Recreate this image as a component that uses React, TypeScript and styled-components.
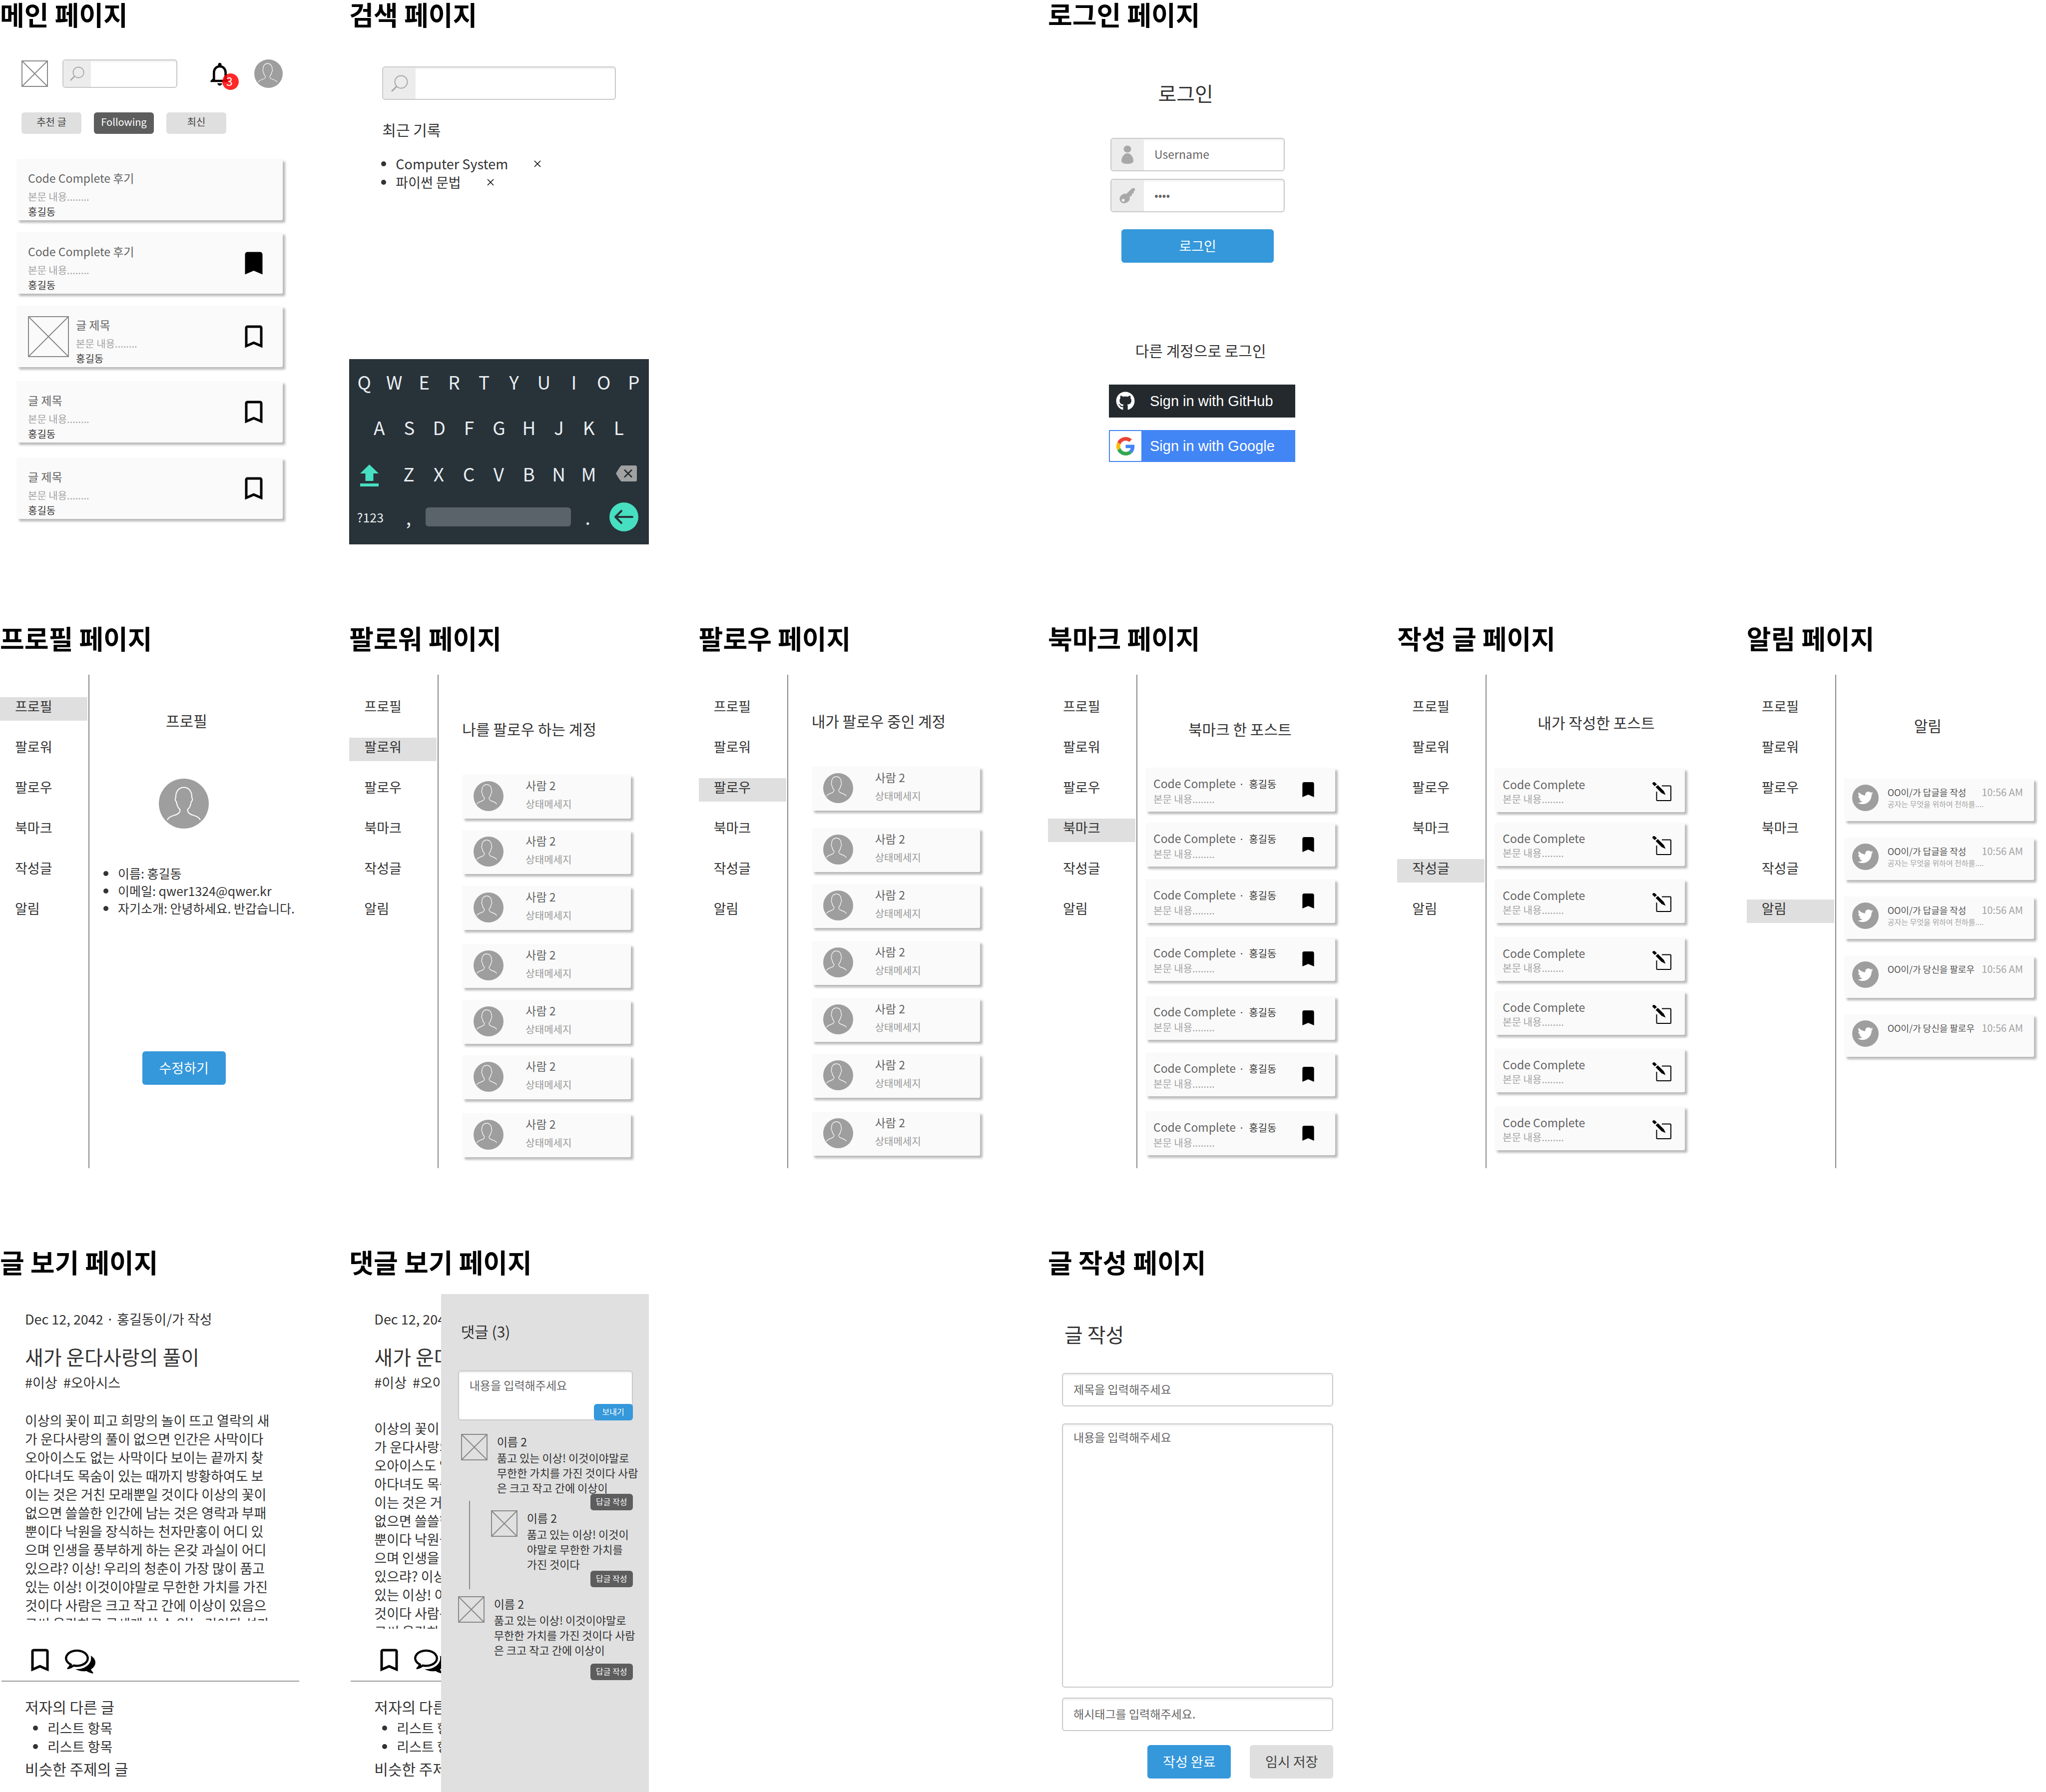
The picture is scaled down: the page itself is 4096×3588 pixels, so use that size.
import React from "react";
import styled, { createGlobalStyle } from "styled-components";
import { FaGithub, FaTwitter } from "react-icons/fa";

const GlobalStyle = createGlobalStyle`
  *, *::before, *::after { box-sizing: border-box; }
  body {
    margin: 0;
    background: #fff;
    color: #333;
    font-family: "Noto Sans CJK KR", "Noto Sans", sans-serif;
    font-size: 27px;
    line-height: 37px;
  }
  h1, h2, h3, p, ul { margin: 0; padding: 0; font-weight: 400; }
  ul { list-style: none; }
  button { border: 0; padding: 0; background: none; font: inherit; color: inherit; }
  a { color: inherit; text-decoration: none; }
  input, textarea { border: 0; padding: 0; background: none; font: inherit; color: #666; outline: 0; }
  input::placeholder, textarea::placeholder { color: #666; opacity: 1; }
  svg { display: block; flex: none; }
`;

/* ---------- board ---------- */

const Board = styled.main`
  display: grid;
  grid-template-columns: repeat(6, minmax(0, 1fr));
  column-gap: 100px;
  row-gap: 159px;
`;

const Page = styled.section<{ $column: number; $row: number }>`
  grid-column: ${(p) => p.$column};
  grid-row: ${(p) => p.$row};
  display: flex;
  flex-direction: column;
`;

const PageTitle = styled.h1`
  height: 93px;
  font-size: 53px;
  line-height: 56px;
  font-weight: 700;
  color: #000;
  white-space: nowrap;
`;

const Screen = styled.div`
  min-height: 997px;
  display: flex;
  flex-direction: column;
  position: relative;
`;

/* ---------- shared parts ---------- */

const Field = styled.div<{ $height?: number }>`
  display: flex;
  height: ${(p) => p.$height ?? 67}px;
  border: 2px solid #c9c9c9;
  border-radius: 6px;
  background: #fff;
  box-shadow: inset 0 3px 3px rgba(0, 0, 0, 0.06);
  overflow: hidden;
`;

const FieldIcon = styled.span<{ $width?: number }>`
  flex: none;
  width: ${(p) => p.$width ?? 65}px;
  display: flex;
  align-items: center;
  justify-content: center;
  background: #ececec;
`;

const FieldInput = styled.input`
  flex: 1;
  min-width: 0;
  padding: 0 21px 4px;
  font-size: 23px;
  line-height: 34px;
`;

const TextBox = styled.textarea<{ $height: number; $top: number }>`
  display: block;
  width: 100%;
  height: ${(p) => p.$height}px;
  padding: ${(p) => p.$top}px 21px;
  border: 2px solid #c9c9c9;
  border-radius: 6px;
  background: #fff;
  box-shadow: inset 0 3px 3px rgba(0, 0, 0, 0.06);
  font-size: 23px;
  line-height: 34px;
  resize: none;
`;

const Button = styled.button<{ $tone?: "primary" | "plain"; $width?: number }>`
  width: ${(p) => (p.$width ? `${p.$width}px` : "auto")};
  height: 67px;
  padding-bottom: 3px;
  border-radius: 6px;
  background: ${(p) => (p.$tone === "plain" ? "#dfdfdf" : "#3598db")};
  color: ${(p) => (p.$tone === "plain" ? "#444" : "#fff")};
  font-size: 27px;
`;

const SmallButton = styled.button<{ $tone?: "primary" | "dark" }>`
  width: ${(p) => (p.$tone === "primary" ? 78 : 85)}px;
  height: 33px;
  padding-bottom: 3px;
  border-radius: 6px;
  background: ${(p) => (p.$tone === "primary" ? "#3598db" : "#5d5d5d")};
  color: #fff;
  font-size: 16px;
  line-height: 24px;
`;

const Card = styled.article<{ $height?: number }>`
  display: flex;
  min-height: ${(p) => p.$height ?? 88}px;
  background: #fafafa;
  border-radius: 3px;
  box-shadow: 5px 5px 4px rgba(0, 0, 0, 0.27);
`;

const CardItem = styled.li<{ $gap: number }>`
  margin-top: ${(p) => p.$gap}px;
`;

const CardTitle = styled.h3`
  font-size: 23px;
  line-height: 30px;
  color: #636363;
  white-space: nowrap;
`;

const CardNote = styled.p`
  font-size: 20px;
  line-height: 30px;
  color: #a3a3a3;
  white-space: nowrap;
`;

const CardAuthor = styled.span`
  display: block;
  font-size: 20px;
  line-height: 30px;
  color: #333;
`;

const Heading = styled.h2`
  font-size: 30px;
  line-height: 44px;
  color: #333;
  white-space: nowrap;
`;

const LargeHeading = styled.h2`
  font-size: 40px;
  line-height: 58px;
  color: #333;
  white-space: nowrap;
`;

const BulletItem = styled.li<{ $compact?: boolean }>`
  display: flex;
  align-items: center;
  gap: 19px;
  font-size: ${(p) => (p.$compact ? 25 : 27)}px;
  line-height: ${(p) => (p.$compact ? 35 : 37)}px;
  white-space: nowrap;
  &::before {
    content: "";
    flex: none;
    width: 10px;
    height: 10px;
    border-radius: 50%;
    background: #333;
  }
`;

/* ---------- drawings ---------- */

const Placeholder = ({ size }: { size: number }) => (
  <svg width={size} height={size} viewBox={`0 0 ${size} ${size}`} fill="none" stroke="#888" strokeWidth="2" role="img" aria-label="이미지">
    <rect x="1" y="1" width={size - 2} height={size - 2} />
    <path d={`M1 1 ${size - 1} ${size - 1}M${size - 1} 1 1 ${size - 1}`} />
  </svg>
);

const Avatar = ({ size, shift = 0 }: { size: number; shift?: number }) => (
  <svg width={size} height={size} viewBox="0 0 100 100" role="img" aria-label="프로필 사진">
    <circle cx="50" cy="50" r="50" fill="#9e9e9e" />
    <path
      transform={`translate(${-shift} ${-shift})`}
      d="M17 83C21 71 43 76 42.5 62C38 58 36 53 35.5 47C31.500 43 32.500 39 34 38C32.500 10.500 67.500 10.500 66 38C67.500 39 68.500 43 64.500 47C64 53 62 58 57.500 62C57 76 79 71 83 83"
      fill="none"
      stroke="#fff"
      strokeWidth="2"
    />
  </svg>
);

const SearchIcon = ({ size }: { size: number }) => (
  <svg width={size} height={size} viewBox="0 0 34 34" fill="none" stroke="#a6a6a6" strokeLinecap="round">
    <circle cx="20" cy="14" r="12.500" strokeWidth="2" />
    <path d="M11 23 2 32" strokeWidth="3" />
  </svg>
);

const BellIcon = () => (
  <svg width="56" height="56" viewBox="0 0 24 24">
    <path d="M12 22c1.100 0 2-.9 2-2h-4c0 1.100.89 2 2 2zm6-6v-5c0-3.070-1.640-5.640-4.500-6.320V4c0-.83-.67-1.500-1.500-1.500s-1.500.67-1.500 1.500v.68C7.630 5.360 6 7.920 6 11v5l-2 2v1h16v-1l-2-2zm-2 1H8v-6c0-2.480 1.510-4.500 4-4.500s4 2.020 4 4.500v6z" />
  </svg>
);

const BookmarkIcon = ({ size, filled }: { size: number; filled?: boolean }) => (
  <svg width={size} height={size} viewBox="0 0 24 24">
    <path
      d={
        filled
          ? "M17 3H7c-1.100 0-2 .9-2 2v16l7-3 7 3V5c0-1.100-.9-2-2-2z"
          : "M17 3H7c-1.100 0-1.990.9-1.990 2L5 21l7-3 7 3V5c0-1.100-.9-2-2-2zm0 15l-5-2.180L7 18V5h10v13z"
      }
    />
  </svg>
);

const ChatIcon = () => (
  <svg width="61" height="61" viewBox="0 0 1792 1792">
    <path d="M704 384q-153 0-286 52t-211.500 141-78.500 191q0 82 53 158t149 132l97 56-35 84q34-20 62-39l44-31 53 10q78 14 153 14 153 0 286-52t211.500-141 78.500-191-78.500-191-211.500-141-286-52zm0-128q191 0 353.500 68.500t256.500 186.500 94 257-94 257-256.500 186.500-353.500 68.500q-86 0-176-16-124 88-278 128-36 9-86 16h-3q-11 0-20.500-8t-11.500-21q-1-3-1-6.500t.5-6.500 2-6l2.500-5 3.500-5.500 4-5 4.500-5 4-4.500q5-6 23-25t26-29.500 22.500-29 25-38.500 20.500-44q-124-72-195-177t-71-224q0-139 94-257t256.500-186.500 353.500-68.500zm822 1169q10 24 20.500 44t25 38.500 22.500 29 26 29.500 23 25q1 1 4 4.500t4.500 5 4 5 3.500 5.500l2.500 5 2 6 .5 6.500-1 6.500q-3 14-13 22t-22 7q-50-7-86-16-154-40-278-128-90 16-176 16-271 0-472-132 58 4 88 4 161 0 309-45t264-129q125-92 192-212t67-254q0-77-23-152 129 71 204 178t75 230q0 120-71 224.500t-195 176.500z" />
  </svg>
);

const EditIcon = () => (
  <svg width="38" height="38" viewBox="0 0 38 38">
    <path d="M19 7.500H35.500Q37 7.500 37 9V35.500Q37 37 35.500 37H10Q8.500 37 8.500 35.500V19" fill="none" stroke="#000" strokeWidth="2" />
    <path d="M6.500 10 11 6 23 18 26.500 25.500 18.500 22Z" />
    <path d="M3.500 0Q0 0 0 3.500L4.500 8 9 4.500 5 .5Z" />
  </svg>
);

const UserIcon = () => (
  <svg width="26" height="38" viewBox="0 0 26 38" fill="#a8a8a8">
    <ellipse cx="13" cy="7.500" rx="7.500" ry="7" />
    <path d="M13 16C20 16 25 24 25 31C25 35 20 37 13 37C6 37 1 35 1 31C1 24 6 16 13 16Z" />
  </svg>
);

const KeyIcon = () => (
  <svg width="32" height="32" viewBox="0 0 32 32" fill="#a8a8a8">
    <path
      fillRule="evenodd"
      d="M14 12 25 1.500Q27 .5 31 1L31 5.500 28.500 7V11L25 12V16L21.500 17 20.500 18.500Q22 24 17 28Q11 33 4 29.500Q-2 24 2 17Q7 11 14 12ZM4.500 26.500Q7.500 29 10.500 26.500Q11 22.500 8 22Q4.500 22 4.500 26.500Z"
    />
  </svg>
);

const CloseIcon = () => (
  <svg width="14" height="14" viewBox="0 0 14 14" stroke="#000" strokeWidth="1.500">
    <path d="M1 1 13 13M13 1 1 13" />
  </svg>
);

const GoogleIcon = () => (
  <svg width="37" height="37" viewBox="0 0 48 48">
    <path fill="#EA4335" d="M24 9.500c3.540 0 6.710 1.220 9.210 3.600l6.850-6.850C35.900 2.380 30.470 0 24 0 14.620 0 6.510 5.380 2.560 13.220l7.980 6.190C12.430 13.720 17.740 9.500 24 9.500z" />
    <path fill="#4285F4" d="M46.980 24.550c0-1.570-.15-3.090-.38-4.550H24v9.020h12.940c-.58 2.960-2.260 5.480-4.780 7.180l7.730 6c4.510-4.180 7.090-10.360 7.090-17.650z" />
    <path fill="#FBBC05" d="M10.530 28.590c-.48-1.450-.76-2.990-.76-4.590s.27-3.140.76-4.590l-7.980-6.190C.92 16.460 0 20.120 0 24c0 3.880.92 7.540 2.560 10.780l7.970-6.190z" />
    <path fill="#34A853" d="M24 48c6.480 0 11.930-2.130 15.890-5.810l-7.730-6c-2.150 1.450-4.920 2.300-8.160 2.300-6.260 0-11.570-4.220-13.470-9.910l-7.980 6.190C6.510 42.620 14.620 48 24 48z" />
  </svg>
);

/* ---------- main page ---------- */

const MainHeader = styled.header`
  display: flex;
  align-items: center;
  padding: 26px 33px 0 43px;
`;

const HeaderSearch = styled.div`
  flex: 1;
  min-width: 0;
  margin: 0 57px 0 29px;
`;

const BellButton = styled.button`
  position: relative;
  margin-right: 41px;
`;

const Badge = styled.span`
  position: absolute;
  left: 33px;
  top: 27px;
  width: 33px;
  height: 33px;
  padding: 0 5px 3px 0;
  display: flex;
  align-items: center;
  justify-content: center;
  border-radius: 50%;
  background: rgba(255, 0, 0, 0.84);
  color: #fff;
  font-size: 23px;
  line-height: 30px;
`;

const Tabs = styled.nav`
  display: flex;
  gap: 25px;
  margin: 49px 0 0 43px;
`;

const Tab = styled.button<{ $active?: boolean }>`
  width: 120px;
  height: 43px;
  padding-bottom: 6px;
  border-radius: 6px;
  background: ${(p) => (p.$active ? "#5d5d5d" : "#dfdfdf")};
  color: ${(p) => (p.$active ? "#fff" : "#444")};
  font-size: 20px;
  line-height: 30px;
`;

const PostList = styled.ul`
  margin: 26px 33px 0;
`;

const PostCard = styled(Card)`
  align-items: center;
  padding: 0 28px 0 23px;
`;

const PostText = styled.div<{ $offset?: boolean }>`
  flex: 1;
  align-self: flex-start;
  padding: 23px 0 0 ${(p) => (p.$offset ? 14 : 0)}px;
`;

const PostNote = styled(CardNote)`
  margin-top: 8px;
`;

type Post = { title: string; gap: number; thumb?: boolean; mark?: "filled" | "outline" };

const posts: Post[] = [
  { title: "Code Complete 후기", gap: 24 },
  { title: "Code Complete 후기", gap: 24, mark: "filled" },
  { title: "글 제목", gap: 24, thumb: true, mark: "outline" },
  { title: "글 제목", gap: 28, mark: "outline" },
  { title: "글 제목", gap: 30, mark: "outline" },
];

const MainPage = () => (
  <Screen>
    <MainHeader>
      <Placeholder size={53} />
      <HeaderSearch>
        <Field $height={57}>
          <FieldIcon $width={55}>
            <SearchIcon size={29} />
          </FieldIcon>
          <FieldInput type="search" aria-label="검색" />
        </Field>
      </HeaderSearch>
      <BellButton type="button" aria-label="알림">
        <BellIcon />
        <Badge>3</Badge>
      </BellButton>
      <Avatar size={57} shift={3} />
    </MainHeader>
    <Tabs>
      <Tab type="button">추천 글</Tab>
      <Tab type="button" $active>
        Following
      </Tab>
      <Tab type="button">최신</Tab>
    </Tabs>
    <PostList>
      {posts.map((post, i) => (
        <CardItem key={i} $gap={post.gap}>
          <PostCard $height={123}>
            {post.thumb && <Placeholder size={82} />}
            <PostText $offset={post.thumb}>
              <CardTitle>{post.title}</CardTitle>
              <PostNote>본문 내용........</PostNote>
              <CardAuthor>홍길동</CardAuthor>
            </PostText>
            {post.mark && (
              <button type="button" aria-label="북마크">
                <BookmarkIcon size={60} filled={post.mark === "filled"} />
              </button>
            )}
          </PostCard>
        </CardItem>
      ))}
    </PostList>
  </Screen>
);

/* ---------- search page ---------- */

const SearchTop = styled.div`
  flex: 1;
  padding: 40px 66px 0;
`;

const RecentHeading = styled(Heading)`
  margin-top: 37px;
`;

const RecentList = styled.ul`
  margin: 28px 0 0 -2px;
`;

const RemoveButton = styled.button`
  margin-left: 33px;
`;

const Keyboard = styled.div`
  display: grid;
  grid-template-rows: 90px 92px 94px 80px;
  padding-bottom: 15px;
  background: #283239;
  color: #e8edf2;
`;

const KeyRow = styled.div<{ $columns: string; $inset?: string }>`
  display: grid;
  grid-template-columns: ${(p) => p.$columns};
  align-items: center;
  padding: 0 ${(p) => p.$inset ?? "0"};
`;

const Key = styled.button`
  display: flex;
  justify-content: center;
  font-size: 37px;
  line-height: 54px;
`;

const ModeKey = styled(Key)`
  font-size: 25px;
  line-height: 36px;
`;

const ShiftKey = styled(Key)`
  padding: 8px 8px 0 0;
`;

const SpaceKey = styled.button`
  height: 38px;
  border-radius: 6px;
  background: #5a636a;
`;

const EnterKey = styled.button`
  justify-self: end;
  width: 58px;
  height: 58px;
  display: flex;
  align-items: center;
  justify-content: center;
  border-radius: 50%;
  background: #47dfc1;
`;

const recent = ["Computer System", "파이썬 문법"];

const letters = (text: string) =>
  text.split("").map((letter) => (
    <Key key={letter} type="button">
      {letter}
    </Key>
  ));

const SearchPage = () => (
  <Screen>
    <SearchTop>
      <Field>
        <FieldIcon>
          <SearchIcon size={34} />
        </FieldIcon>
        <FieldInput type="search" aria-label="검색어" />
      </Field>
      <RecentHeading>최근 기록</RecentHeading>
      <RecentList>
        {recent.map((term) => (
          <BulletItem key={term}>
            {term}
            <RemoveButton type="button" aria-label={`${term} 삭제`}>
              <CloseIcon />
            </RemoveButton>
          </BulletItem>
        ))}
      </RecentList>
    </SearchTop>
    <Keyboard>
      <KeyRow $columns="repeat(10, 1fr)">{letters("QWERTYUIOP")}</KeyRow>
      <KeyRow $columns="repeat(9, 1fr)" $inset="30px">
        {letters("ASDFGHJKL")}
      </KeyRow>
      <KeyRow $columns="89px repeat(7, 1fr) 90px">
        <ShiftKey type="button" aria-label="Shift">
          <svg width="37" height="44" viewBox="0 0 37 44" fill="#47dfc1">
            <path d="M18.500 0 37 18H26.500V33H10.500V18H0z" />
            <path d="M0 38H37V44H0z" />
          </svg>
        </ShiftKey>
        {letters("ZXCVBNM")}
        <Key type="button" aria-label="지우기">
          <svg width="42" height="32" viewBox="0 0 42 32">
            <path d="M11 0H39Q42 0 42 3V29Q42 32 39 32H11Q8 30 0 16Q8 2 11 0Z" fill="#a1a1a1" />
            <path d="M17 8.500 32 23.500M32 8.500 17 23.500" stroke="#283239" strokeWidth="3" />
          </svg>
        </Key>
      </KeyRow>
      <KeyRow $columns="84px 69px 1fr 68px 67px" $inset="21px 0 0">
        <ModeKey type="button">?123</ModeKey>
        <Key type="button">,</Key>
        <SpaceKey type="button" aria-label="스페이스" />
        <Key type="button">.</Key>
        <EnterKey type="button" aria-label="입력">
          <svg width="38" height="28" viewBox="0 0 38 28" fill="none" stroke="#283239" strokeWidth="4" strokeLinecap="round" strokeLinejoin="round">
            <path d="M36 14H3M14 2 2 14 14 26" />
          </svg>
        </EnterKey>
      </KeyRow>
    </Keyboard>
  </Screen>
);

/* ---------- login page ---------- */

const LoginForm = styled.form`
  display: flex;
  flex-direction: column;
  gap: 15px;
  padding: 64px 125px 0;
`;

const LoginHeading = styled(LargeHeading)`
  margin-bottom: 46px;
  padding-right: 48px;
  text-align: center;
`;

const LoginButton = styled(Button)`
  margin: 19px 22px 0;
`;

const Providers = styled.section`
  display: flex;
  flex-direction: column;
  margin: 153px 104px 0 122px;
`;

const ProviderHeading = styled(Heading)`
  margin-bottom: 47px;
  padding-right: 6px;
  text-align: center;
`;

const ProviderButton = styled.button<{ $brand: "github" | "google" }>`
  display: flex;
  align-items: center;
  height: ${(p) => (p.$brand === "github" ? 66 : 64)}px;
  margin-top: ${(p) => (p.$brand === "github" ? 0 : 25)}px;
  border: 2px solid ${(p) => (p.$brand === "github" ? "#24292d" : "#4285f4")};
  background: ${(p) => (p.$brand === "github" ? "#24292d" : "#4285f4")};
  color: #fff;
  font-family: "Liberation Sans", Arial, sans-serif;
  font-size: 29px;
  line-height: 34px;
  white-space: nowrap;
`;

const ProviderLogo = styled.span<{ $boxed?: boolean }>`
  width: 63px;
  height: 100%;
  margin-right: 17px;
  display: flex;
  align-items: center;
  justify-content: center;
  background: ${(p) => (p.$boxed ? "#fff" : "transparent")};
`;

const LoginPage = () => (
  <Screen>
    <LoginForm>
      <LoginHeading>로그인</LoginHeading>
      <Field>
        <FieldIcon>
          <UserIcon />
        </FieldIcon>
        <FieldInput type="text" aria-label="Username" placeholder="Username" />
      </Field>
      <Field>
        <FieldIcon>
          <KeyIcon />
        </FieldIcon>
        <FieldInput type="password" aria-label="비밀번호" defaultValue="1234" />
      </Field>
      <LoginButton type="button">로그인</LoginButton>
    </LoginForm>
    <Providers>
      <ProviderHeading>다른 계정으로 로그인</ProviderHeading>
      <ProviderButton type="button" $brand="github">
        <ProviderLogo>
          <FaGithub size={38} />
        </ProviderLogo>
        Sign in with GitHub
      </ProviderButton>
      <ProviderButton type="button" $brand="google">
        <ProviderLogo $boxed>
          <GoogleIcon />
        </ProviderLogo>
        Sign in with Google
      </ProviderButton>
    </Providers>
  </Screen>
);

/* ---------- account pages ---------- */

const AccountLayout = styled.div`
  flex: 1;
  display: flex;
`;

const SideNav = styled.nav`
  flex: none;
  width: 179px;
  margin-top: 9px;
  padding: 45px 2px 0 0;
  border-right: 2px solid #888;
  display: flex;
  flex-direction: column;
  gap: 34px;
`;

const NavLink = styled.a<{ $active: boolean }>`
  height: 47px;
  padding-left: 30px;
  line-height: 35px;
  background: ${(p) => (p.$active ? "#dfdfdf" : "transparent")};
`;

const AccountBody = styled.div<{ $top: number; $narrow?: boolean }>`
  flex: 1;
  min-width: 0;
  padding: ${(p) => p.$top}px ${(p) => (p.$narrow ? "36px 0 47px" : "24px 0 16px")};
`;

const AccountHeading = styled(Heading)<{ $indent?: number; $space: number }>`
  padding-left: ${(p) => p.$indent ?? 0}px;
  margin-bottom: ${(p) => p.$space}px;
`;

const navItems = ["프로필", "팔로워", "팔로우", "북마크", "작성글", "알림"];

const AccountPage = ({ active, children }: { active: string; children: React.ReactNode }) => (
  <Screen>
    <AccountLayout>
      <SideNav>
        {navItems.map((item) => (
          <NavLink key={item} href="#" $active={item === active}>
            {item}
          </NavLink>
        ))}
      </SideNav>
      {children}
    </AccountLayout>
  </Screen>
);

const ProfileAvatar = styled.div`
  display: flex;
  justify-content: center;
  padding-right: 34px;
`;

const ProfileList = styled.ul`
  margin: 72px -24px 269px 12px;
`;

const ProfilePage = () => (
  <AccountPage active="프로필">
    <AccountBody $top={78}>
      <AccountHeading $indent={137} $space={95}>
        프로필
      </AccountHeading>
      <ProfileAvatar>
        <Avatar size={100} />
      </ProfileAvatar>
      <ProfileList>
        <BulletItem $compact>이름: 홍길동</BulletItem>
        <BulletItem $compact>이메일: qwer1324@qwer.kr</BulletItem>
        <BulletItem $compact>자기소개: 안녕하세요. 반갑습니다.</BulletItem>
      </ProfileList>
      <ProfileAvatar>
        <Button type="button" $width={167}>
          수정하기
        </Button>
      </ProfileAvatar>
    </AccountBody>
  </AccountPage>
);

const PersonCard = styled(Card)`
  padding: 13px 0 0 23px;
`;

const PersonText = styled.div`
  margin: -7px 0 0 44px;
`;

const PersonNote = styled(CardNote)`
  margin-top: 8px;
  color: #999;
`;

const PeoplePage = ({ active, title, top, gaps }: { active: string; title: string; top: number; gaps: number[] }) => (
  <AccountPage active={active}>
    <AccountBody $top={top} $narrow>
      <AccountHeading $space={70}>{title}</AccountHeading>
      <ul>
        {gaps.map((gap, i) => (
          <CardItem key={i} $gap={gap}>
            <PersonCard>
              <Avatar size={60} shift={6} />
              <PersonText>
                <CardTitle>사람 2</CardTitle>
                <PersonNote>상태메세지</PersonNote>
              </PersonText>
            </PersonCard>
          </CardItem>
        ))}
      </ul>
    </AccountBody>
  </AccountPage>
);

const EntryCard = styled(Card)<{ $wide?: boolean }>`
  align-items: center;
  padding: 0 ${(p) => (p.$wide ? 27 : 34)}px 0 16px;
`;

const EntryText = styled.div`
  flex: 1;
  padding-top: 5px;
`;

const EntryTitle = styled.div`
  display: flex;
  align-items: baseline;
  gap: 6px;
`;

const EntryAction = styled.button<{ $lowered?: boolean }>`
  padding-top: ${(p) => (p.$lowered ? 6 : 0)}px;
`;

const EntriesPage = ({
  active,
  title,
  top,
  space,
  gaps,
  bookmarks,
}: {
  active: string;
  title: string;
  top: number;
  space: number;
  gaps: number[];
  bookmarks?: boolean;
}) => (
  <AccountPage active={active}>
    <AccountBody $top={top}>
      <AccountHeading $indent={86} $space={space}>
        {title}
      </AccountHeading>
      <ul>
        {gaps.map((gap, i) => (
          <CardItem key={i} $gap={gap}>
            <EntryCard $wide={!bookmarks}>
              <EntryText>
                <EntryTitle>
                  <CardTitle>Code Complete</CardTitle>
                  {bookmarks && <CardAuthor>·&nbsp; 홍길동</CardAuthor>}
                </EntryTitle>
                <CardNote>본문 내용........</CardNote>
              </EntryText>
              <EntryAction type="button" $lowered={!bookmarks} aria-label={bookmarks ? "북마크" : "수정"}>
                {bookmarks ? <BookmarkIcon size={40} filled /> : <EditIcon />}
              </EntryAction>
            </EntryCard>
          </CardItem>
        ))}
      </ul>
    </AccountBody>
  </AccountPage>
);

const NoticeCard = styled(Card)`
  padding: 12px 22px 0 16px;
`;

const NoticeIcon = styled.span`
  flex: none;
  width: 53px;
  height: 53px;
  display: flex;
  align-items: center;
  justify-content: center;
  border-radius: 50%;
  background: #9e9e9e;
  color: #fff;
`;

const NoticeText = styled.div`
  flex: 1;
  padding-left: 18px;
  white-space: nowrap;
`;

const NoticeTitle = styled.h3`
  font-size: 18px;
  line-height: 24px;
  color: #555;
`;

const NoticeNote = styled.p`
  font-size: 15px;
  line-height: 18px;
  color: #a3a3a3;
`;

const NoticeTime = styled.time`
  font-size: 20px;
  line-height: 30px;
  color: #a3a3a3;
`;

const NoticeRow = styled.div`
  display: flex;
  justify-content: space-between;
  align-items: center;
`;

const notices = [true, true, true, false, false];

const NoticePage = () => (
  <AccountPage active="알림">
    <AccountBody $top={88}>
      <AccountHeading $indent={140} $space={85}>
        알림
      </AccountHeading>
      <ul>
        {notices.map((reply, i) => (
          <CardItem key={i} $gap={i === 0 ? 0 : 33}>
            <NoticeCard $height={85}>
              <NoticeIcon>
                <FaTwitter size={31} />
              </NoticeIcon>
              <NoticeText>
                <NoticeRow>
                  <NoticeTitle>{reply ? "OO이/가 답글을 작성" : "OO이/가 당신을 팔로우"}</NoticeTitle>
                  <NoticeTime>10:56 AM</NoticeTime>
                </NoticeRow>
                {reply && <NoticeNote>공자는 무엇을 위하여 천하를....</NoticeNote>}
              </NoticeText>
            </NoticeCard>
          </CardItem>
        ))}
      </ul>
    </AccountBody>
  </AccountPage>
);

/* ---------- article pages ---------- */

const ArticleHead = styled.header`
  padding: 31px 43px 0 50px;
  white-space: nowrap;
`;

const ArticleTitle = styled(LargeHeading)`
  margin: 28px 0 4px;
`;

const Tags = styled.p`
  white-space: pre;
`;

const ArticleText = styled.p<{ $lowered?: boolean }>`
  height: 420px;
  margin: ${(p) => (p.$lowered ? "55px 54px 33px 50px" : "39px 54px 49px 50px")};
  overflow: hidden;
`;

const ArticleActions = styled.div`
  display: flex;
  align-items: center;
  gap: 20px;
  height: 60px;
  margin-bottom: 11px;
  padding-left: 50px;
`;

const Divider = styled.hr`
  width: auto;
  margin: 0 0 0 3px;
  border: 0;
  border-top: 2px solid #999;
`;

const Related = styled.section`
  padding: 28px 43px 0 50px;
`;

const RelatedList = styled.ul`
  margin: 2px 0 4px;
  padding-left: 16px;
`;

const Article = ({ lowered }: { lowered?: boolean }) => (
  <article>
    <ArticleHead>
      <p>Dec 12, 2042 · 홍길동이/가 작성</p>
      <ArticleTitle>새가 운다사랑의 풀이</ArticleTitle>
      <Tags>{"#이상  #오아시스"}</Tags>
    </ArticleHead>
    <ArticleText $lowered={lowered}>
      이상의 꽃이 피고 희망의 놀이 뜨고 열락의 새가 운다사랑의 풀이 없으면 인간은 사막이다 오아이스도 없는 사막이다
      보이는 끝까지 찾아다녀도 목숨이 있는 때까지 방황하여도 보이는 것은 거친 모래뿐일 것이다 이상의 꽃이 없으면
      쓸쓸한 인간에 남는 것은 영락과 부패뿐이다 낙원을 장식하는 천자만홍이 어디 있으며 인생을 풍부하게 하는 온갖
      과실이 어디 있으랴? 이상! 우리의 청춘이 가장 많이 품고 있는 이상! 이것이야말로 무한한 가치를 가진 것이다 사람은
      크고 작고 간에 이상이 있음으로써 용감하고 굳세게 살 수 있는 것이다 석가
    </ArticleText>
    <ArticleActions>
      <button type="button" aria-label="북마크">
        <BookmarkIcon size={60} />
      </button>
      <button type="button" aria-label="댓글">
        <ChatIcon />
      </button>
    </ArticleActions>
    <Divider />
    <Related>
      <Heading>저자의 다른 글</Heading>
      <RelatedList>
        <BulletItem>리스트 항목</BulletItem>
        <BulletItem>리스트 항목</BulletItem>
      </RelatedList>
      <Heading>비슷한 주제의 글</Heading>
    </Related>
  </article>
);

const Drawer = styled.aside`
  position: absolute;
  top: 0;
  right: 0;
  bottom: 0;
  width: 416px;
  padding: 52px 32px 0 34px;
  background: #e0e0e0;
`;

const DrawerHeading = styled(Heading)`
  padding-left: 6px;
  margin-bottom: 57px;
`;

const CommentForm = styled.form`
  position: relative;
  margin-bottom: 27px;
`;

const SendButton = styled(SmallButton)`
  position: absolute;
  right: 0;
  bottom: 0;
`;

const CommentItem = styled.li<{ $indent: number; $space: number; $threaded?: boolean }>`
  position: relative;
  display: flex;
  flex-direction: column;
  margin-right: -13px;
  margin-top: ${(p) => p.$space}px;
  padding-left: ${(p) => p.$indent}px;
  &::before {
    content: "";
    display: ${(p) => (p.$threaded ? "block" : "none")};
    position: absolute;
    left: 22px;
    top: -19px;
    bottom: -4px;
    width: 2px;
    background: #888;
  }
`;

const CommentRow = styled.div`
  display: flex;
  gap: 19px;
`;

const CommentText = styled.p<{ $width: number }>`
  max-width: ${(p) => p.$width}px;
  margin-top: 2px;
  font-size: 22px;
  line-height: 30px;
`;

const CommentName = styled.h3`
  font-size: 23px;
  line-height: 30px;
`;

const ReplyButton = styled(SmallButton)<{ $lift: number }>`
  align-self: flex-end;
  margin: ${(p) => p.$lift}px 13px 0 0;
`;

const comments = [
  { indent: 6, space: 0, width: 285, lift: -2, text: "품고 있는 이상! 이것이야말로 무한한 가치를 가진 것이다 사람은 크고 작고 간에 이상이" },
  { indent: 66, space: 0, width: 206, lift: -1, threaded: true, text: "품고 있는 이상! 이것이야말로 무한한 가치를 가진 것이다" },
  { indent: 0, space: 18, width: 285, lift: 13, text: "품고 있는 이상! 이것이야말로 무한한 가치를 가진 것이다 사람은 크고 작고 간에 이상이" },
];

const CommentsPage = () => (
  <Screen>
    <Article lowered />
    <Drawer>
      <DrawerHeading>댓글 (3)</DrawerHeading>
      <CommentForm>
        <TextBox $height={100} $top={10} aria-label="댓글 내용" placeholder="내용을 입력해주세요" />
        <SendButton type="button" $tone="primary">
          보내기
        </SendButton>
      </CommentForm>
      <ul>
        {comments.map((comment, i) => (
          <CommentItem key={i} $indent={comment.indent} $space={comment.space} $threaded={comment.threaded}>
            <CommentRow>
              <Placeholder size={53} />
              <div>
                <CommentName>이름 2</CommentName>
                <CommentText $width={comment.width}>{comment.text}</CommentText>
              </div>
            </CommentRow>
            <ReplyButton type="button" $lift={comment.lift}>
              답글 작성
            </ReplyButton>
          </CommentItem>
        ))}
      </ul>
    </Drawer>
  </Screen>
);

/* ---------- write page ---------- */

const WriteForm = styled.form`
  display: flex;
  flex-direction: column;
  padding: 51px 28px 0;
`;

const WriteHeading = styled(LargeHeading)`
  margin-bottom: 49px;
  padding-left: 5px;
`;

const WriteBody = styled.div`
  margin: 34px 0 20px;
`;

const WriteActions = styled.div`
  display: flex;
  justify-content: flex-end;
  gap: 38px;
  margin-top: 28px;
`;

const WritePage = () => (
  <Screen>
    <WriteForm>
      <WriteHeading>글 작성</WriteHeading>
      <Field>
        <FieldInput type="text" aria-label="제목" placeholder="제목을 입력해주세요" />
      </Field>
      <WriteBody>
        <TextBox $height={529} $top={8} aria-label="내용" placeholder="내용을 입력해주세요" />
      </WriteBody>
      <Field>
        <FieldInput type="text" aria-label="해시태그" placeholder="해시태그를 입력해주세요." />
      </Field>
      <WriteActions>
        <Button type="button" $width={167}>
          작성 완료
        </Button>
        <Button type="button" $width={167} $tone="plain">
          임시 저장
        </Button>
      </WriteActions>
    </WriteForm>
  </Screen>
);

/* ---------- app ---------- */

const pages = [
  { title: "메인 페이지", column: 1, row: 1, body: <MainPage /> },
  { title: "검색 페이지", column: 2, row: 1, body: <SearchPage /> },
  { title: "로그인 페이지", column: 4, row: 1, body: <LoginPage /> },
  { title: "프로필 페이지", column: 1, row: 2, body: <ProfilePage /> },
  {
    title: "팔로워 페이지",
    column: 2,
    row: 2,
    body: <PeoplePage active="팔로워" title="나를 팔로우 하는 계정" top={95} gaps={[0, 23, 24, 28, 24, 23, 28]} />,
  },
  {
    title: "팔로우 페이지",
    column: 3,
    row: 2,
    body: <PeoplePage active="팔로우" title="내가 팔로우 중인 계정" top={79} gaps={[0, 35, 24, 26, 26, 24, 28]} />,
  },
  {
    title: "북마크 페이지",
    column: 4,
    row: 2,
    body: <EntriesPage active="북마크" title="북마크 한 포스트" top={95} space={56} gaps={[0, 22, 25, 28, 30, 25, 30]} bookmarks />,
  },
  {
    title: "작성 글 페이지",
    column: 5,
    row: 2,
    body: <EntriesPage active="작성글" title="내가 작성한 포스트" top={82} space={70} gaps={[0, 20, 26, 28, 20, 27, 28]} />,
  },
  { title: "알림 페이지", column: 6, row: 2, body: <NoticePage /> },
  {
    title: "글 보기 페이지",
    column: 1,
    row: 3,
    body: (
      <Screen>
        <Article />
      </Screen>
    ),
  },
  { title: "댓글 보기 페이지", column: 2, row: 3, body: <CommentsPage /> },
  { title: "글 작성 페이지", column: 4, row: 3, body: <WritePage /> },
];

export default function App() {
  return (
    <>
      <GlobalStyle />
      <Board>
        {pages.map((page) => (
          <Page key={page.title} $column={page.column} $row={page.row}>
            <PageTitle>{page.title}</PageTitle>
            {page.body}
          </Page>
        ))}
      </Board>
    </>
  );
}
